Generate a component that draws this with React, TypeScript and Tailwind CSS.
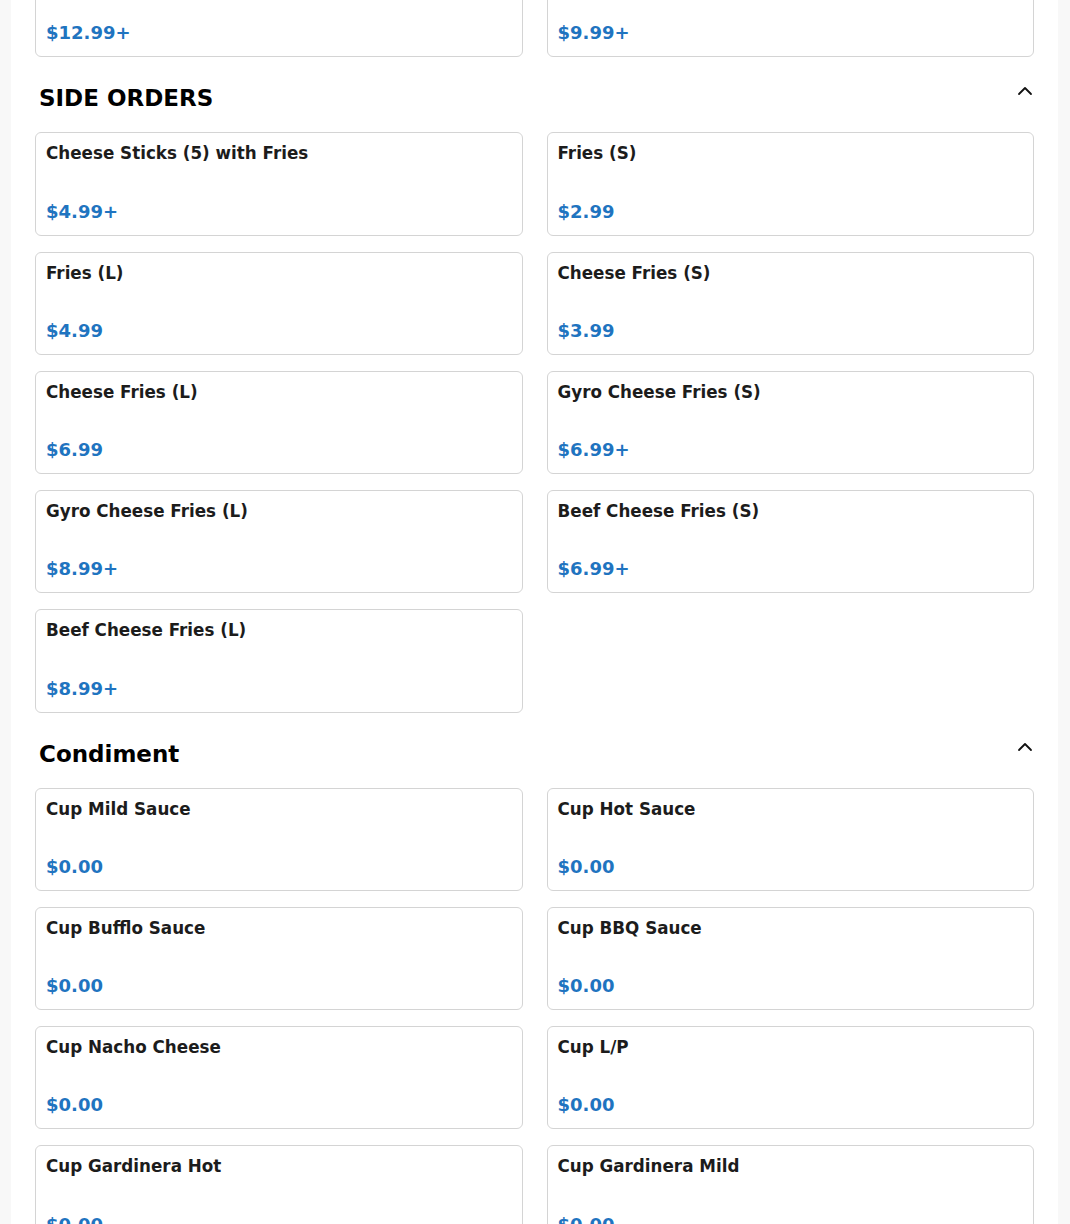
import React from "react";

type Item = { name: string; price: string };

const prevRow: Item[] = [
  { name: "", price: "$12.99+" },
  { name: "", price: "$9.99+" },
];

const sideOrders: Item[] = [
  { name: "Cheese Sticks (5) with Fries", price: "$4.99+" },
  { name: "Fries (S)", price: "$2.99" },
  { name: "Fries (L)", price: "$4.99" },
  { name: "Cheese Fries (S)", price: "$3.99" },
  { name: "Cheese Fries (L)", price: "$6.99" },
  { name: "Gyro Cheese Fries (S)", price: "$6.99+" },
  { name: "Gyro Cheese Fries (L)", price: "$8.99+" },
  { name: "Beef Cheese Fries (S)", price: "$6.99+" },
  { name: "Beef Cheese Fries (L)", price: "$8.99+" },
];

const condiments: Item[] = [
  { name: "Cup Mild Sauce", price: "$0.00" },
  { name: "Cup Hot Sauce", price: "$0.00" },
  { name: "Cup Bufflo Sauce", price: "$0.00" },
  { name: "Cup BBQ Sauce", price: "$0.00" },
  { name: "Cup Nacho Cheese", price: "$0.00" },
  { name: "Cup L/P", price: "$0.00" },
  { name: "Cup Gardinera Hot", price: "$0.00" },
  { name: "Cup Gardinera Mild", price: "$0.00" },
];

function Card({ item }: { item: Item }) {
  return (
    <div className="h-[103.25px] rounded-md border border-[#d4d4d4] bg-white px-[10px] pt-[10px] pb-3 flex flex-col justify-between">
      <div className="text-[16.75px] leading-[20px] font-bold text-[#1c1c1c]">{item.name}</div>
      <div className="text-[18px] leading-[22px] font-bold text-[#1f74c0]">{item.price}</div>
    </div>
  );
}

function Chevron() {
  return (
    <svg width="24" height="24" viewBox="0 0 24 24" fill="none" stroke="#111" strokeWidth="1.8" strokeLinecap="round" strokeLinejoin="round" className="-mr-[3px] -mt-[1px]">
      <path d="m18 15-6-6-6 6" />
    </svg>
  );
}

function Section({ title, items }: { title: string; items: Item[] }) {
  return (
    <div className="mt-[23px]">
      <div className="flex items-start justify-between pl-1 mb-4">
        <h2 className="text-[23px] leading-[36px] font-bold text-black">{title}</h2>
        <Chevron />
      </div>
      <div className="grid grid-cols-2 gap-x-6 gap-y-4">
        {items.map((it, i) => (
          <Card key={i} item={it} />
        ))}
      </div>
    </div>
  );
}

export default function App() {
  return (
    <div className="min-h-screen bg-[#f8f8f8] pl-[11px] pr-[12px] overflow-hidden" style={{ fontFamily: '"DejaVu Sans", sans-serif' }}>
      <div className="bg-white px-6 pb-10">
        <div className="-mt-[46px] grid grid-cols-2 gap-x-6 gap-y-4">
          {prevRow.map((it, i) => (
            <Card key={i} item={it} />
          ))}
        </div>
        <Section title="SIDE ORDERS" items={sideOrders} />
        <Section title="Condiment" items={condiments} />
      </div>
    </div>
  );
}
